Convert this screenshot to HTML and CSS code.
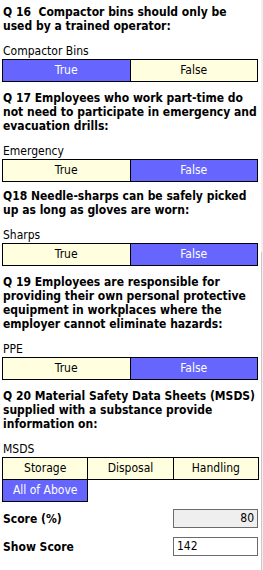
FILE: index.html
```html
<!DOCTYPE html>
<html lang="en">
<head>
  <meta charset="utf-8" />
  <title>Safety Quiz</title>
  <meta name="viewport" content="width=device-width, initial-scale=1.0" />
  <link rel="stylesheet" href="styles.css">
</head>
<body>
  <div class="quiz">
    <div class="question">Q 16&nbsp; Compactor bins should only be used by a trained operator:</div>
    <div class="label">Compactor Bins</div>
    <div class="choices two">
      <div class="choice selected">True</div>
      <div class="choice">False</div>
    </div>

    <div class="question">Q 17 Employees who work part-time do not need to participate in emergency and evacuation drills:</div>
    <div class="label">Emergency</div>
    <div class="choices two">
      <div class="choice">True</div>
      <div class="choice selected">False</div>
    </div>

    <div class="question tight">Q18 Needle-sharps can be safely picked up as long as gloves are worn:</div>
    <div class="label">Sharps</div>
    <div class="choices two">
      <div class="choice">True</div>
      <div class="choice selected">False</div>
    </div>

    <div class="question">Q 19 Employees are responsible for providing their own personal protective equipment in workplaces where the employer cannot eliminate hazards:</div>
    <div class="label">PPE</div>
    <div class="choices two">
      <div class="choice">True</div>
      <div class="choice selected">False</div>
    </div>

    <div class="question">Q 20 Material Safety Data Sheets (MSDS) supplied with a substance provide information on:</div>
    <div class="label">MSDS</div>
    <div class="choices three">
      <div class="choice">Storage</div>
      <div class="choice">Disposal</div>
      <div class="choice">Handling</div>
      <div class="choice selected">All of Above</div>
    </div>

    <div class="score-row first">
      <span class="score-label">Score (%)</span>
      <div class="score-box readonly">80</div>
    </div>
    <div class="score-row">
      <span class="score-label">Show Score</span>
      <div class="score-box">142</div>
    </div>
  </div>
  <div class="scroll-edge"><div class="scroll-thumb"></div></div>
</body>
</html>
```

FILE: styles.css
```css
html, body {
  margin: 0;
  padding: 0;
  overflow: hidden;
  background-color: white;
  font-family: "DejaVu Sans Condensed", "DejaVu Sans", sans-serif;
  color: #000;
}

.quiz {
  width: 256px;
  padding: 0 0 0 2px;
}

.question {
  font-weight: bold;
  font-size: 12px;
  line-height: 14px;
  padding-left: 1px;
  margin-top: 9px;
}

.question:first-child {
  margin-top: 5px;
}

.question.tight {
  margin-top: 7px;
}

.label {
  font-size: 12px;
  line-height: 15px;
  padding-left: 1px;
  margin-top: 11px;
}

.choices {
  display: grid;
  border-top: 1px solid #000;
  border-left: 1px solid #000;
}

.choices.two {
  grid-template-columns: 1fr 1fr;
}

.choices.three {
  grid-template-columns: 1fr 1fr 1fr;
  border-left: none;
  border-top: none;
}

.choice {
  height: 21px;
  line-height: 21px;
  text-align: center;
  font-size: 12px;
  background-color: #ffffe0;
  border-right: 1px solid #000;
  border-bottom: 1px solid #000;
}

.choices.three .choice {
  border-left: 1px solid #000;
  border-top: 1px solid #000;
  margin: 0 -1px -1px 0;
}

.choice.selected {
  background-color: #6666ff;
  color: #fff;
}

.score-row {
  display: flex;
  justify-content: space-between;
  align-items: center;
  margin-top: 9px;
}

.score-row.first {
  margin-top: 8px;
}

.score-label {
  font-weight: bold;
  font-size: 12px;
  padding-left: 1px;
}

.score-box {
  width: 77px;
  height: 17px;
  line-height: 17px;
  border: 1px solid #6b6b6b;
  font-size: 12px;
  padding: 0 3px;
  background-color: white;
}

.score-box.readonly {
  background-color: #efefef;
  text-align: right;
}

.scroll-edge {
  position: fixed;
  top: 0;
  right: 0;
  width: 2px;
  height: 100%;
  background-color: #f0f0f0;
}

.scroll-thumb {
  position: absolute;
  top: 252px;
  bottom: 0;
  left: 0;
  width: 1px;
  background-color: #c8c8c8;
}
```
